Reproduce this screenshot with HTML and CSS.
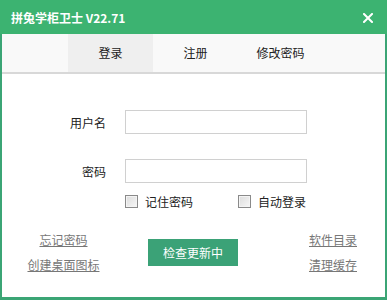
FILE: index.html
```html
<!DOCTYPE html>
<html lang="zh-CN">
<head>
    <meta charset="UTF-8">
    <meta name="viewport" content="width=device-width, initial-scale=1.0">
    <title>拼兔学柜卫士</title>
    <link rel="stylesheet" href="styles.css">
</head>
<body>
    <div class="window">
        <div class="titlebar">
            <span class="title">拼兔学柜卫士 V22.71</span>
            <svg class="close" width="10" height="10" viewBox="0 0 10 10">
                <path d="M1 1 L9 9 M9 1 L1 9" stroke="#fff" stroke-width="2" stroke-linecap="square"/>
            </svg>
        </div>
        <div class="tabs">
            <div class="tab active">登录</div>
            <div class="tab">注册</div>
            <div class="tab">修改密码</div>
        </div>
        <div class="form">
            <div class="row">
                <label class="label">用户名</label>
                <div class="input"></div>
            </div>
            <div class="row second">
                <label class="label">密码</label>
                <div class="input"></div>
            </div>
            <div class="checks">
                <div class="check first"><span class="box"></span>记住密码</div>
                <div class="check"><span class="box"></span>自动登录</div>
            </div>
            <div class="bottom">
                <div class="links">
                    <a href="#">忘记密码</a>
                    <a href="#">创建桌面图标</a>
                </div>
                <button class="update">检查更新中</button>
                <div class="links right">
                    <a href="#">软件目录</a>
                    <a href="#">清理缓存</a>
                </div>
            </div>
        </div>
    </div>
</body>
</html>
```

FILE: styles.css
```css
body {
    margin: 0;
    font-family: "Noto Sans CJK SC", "Noto Sans", sans-serif;
    font-size: 12px;
    color: #222;
}
.window {
    width: 387px;
    height: 300px;
    box-sizing: border-box;
    border: 2px solid #3ba575;
    border-top: none;
    border-bottom-width: 3px;
    background: #fff;
}
.titlebar {
    height: 34px;
    margin: 0 -2px;
    background: #3cb371;
    display: flex;
    align-items: center;
    justify-content: space-between;
    padding: 0 14px 0 11px;
}
.title {
    color: #fff;
    font-weight: bold;
    font-size: 12px;
}
.close {
    display: block;
    margin-top: 2px;
}
.tabs {
    height: 38px;
    background: #f9f9f9;
    border-bottom: 2px solid #d8d8d8;
    display: flex;
    padding-left: 66px;
}
.tab {
    width: 85px;
    line-height: 38px;
    text-align: center;
    color: #222;
}
.tab.active {
    background: #efefef;
}
.form {
    padding-top: 36px;
}
.row {
    display: flex;
    align-items: center;
    gap: 19px;
}
.row.second {
    margin-top: 25px;
}
.label {
    width: 104px;
    text-align: right;
}
.input {
    width: 180px;
    height: 22px;
    border: 1px solid #d0d0d0;
}
.checks {
    display: flex;
    padding-left: 123px;
    margin-top: 11px;
    height: 14px;
    align-items: center;
}
.check {
    display: flex;
    align-items: center;
    gap: 7px;
}
.check.first {
    width: 113px;
}
.box {
    width: 11px;
    height: 11px;
    border: 1px solid #8a8a8a;
    background: linear-gradient(135deg, #dcdcdc, #f7f7f7);
    box-shadow: inset 0 0 0 1px #f4f4f4;
}
.bottom {
    display: flex;
    align-items: center;
    margin-top: 19px;
    height: 50px;
}
.links {
    width: 123px;
    display: flex;
    flex-direction: column;
    align-items: center;
}
.links.right {
    width: 100px;
    margin-left: 45px;
}
.links a {
    line-height: 25px;
    color: #777;
    text-decoration: underline;
}
.update {
    margin-left: 23px;
    width: 90px;
    height: 27px;
    border: none;
    background: #3ba277;
    color: #fff;
    font-family: inherit;
    font-size: 12px;
    padding: 0;
}
```
